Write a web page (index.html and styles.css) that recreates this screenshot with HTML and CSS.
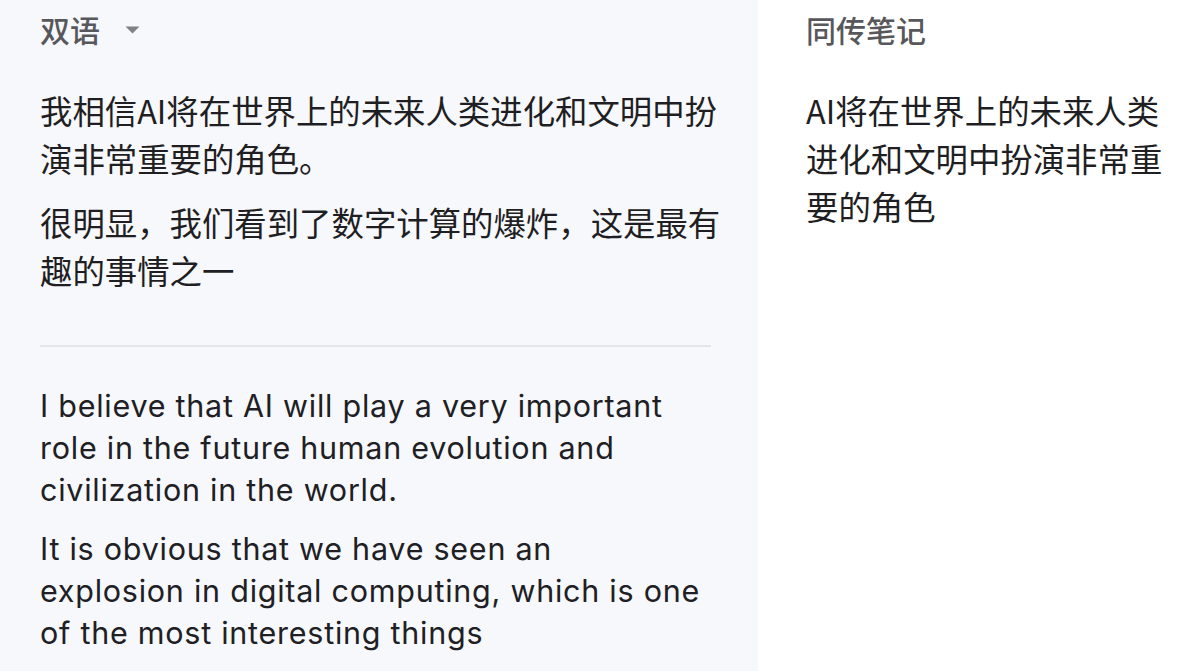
FILE: index.html
```html
<!DOCTYPE html>
<html lang="zh-CN">
<head>
<meta charset="utf-8">
<title>双语 同传笔记</title>
<link rel="stylesheet" href="styles.css">
</head>
<body>
<div class="page">
  <section class="bilingual">
    <div class="head">
      <span class="head-title">双语</span>
      <svg class="caret" width="15" height="8" viewBox="0 0 15 8"><path d="M0.5 0.5 L14.5 0.5 L7.5 7.5 Z" fill="#808085"/></svg>
    </div>
    <div class="zh">
      <p>我相信AI将在世界上的未来人类进化和文明中扮演非常重要的角色。</p>
      <p>很明显，我们看到了数字计算的爆炸，这是最有趣的事情之一</p>
    </div>
    <hr class="divider">
    <div class="en">
      <p>I believe that AI will play a very important role in the future human evolution and civilization in the world.</p>
      <p>It is obvious that we have seen an explosion in digital computing, which is one of the most interesting things</p>
    </div>
  </section>
  <section class="notes">
    <div class="head">
      <span class="head-title">同传笔记</span>
    </div>
    <div class="zh">
      <p>AI将在世界上的未来人类进化和文明中扮演非常重要的角色</p>
    </div>
  </section>
</div>
</body>
</html>
```

FILE: styles.css
```css
html, body {
  margin: 0;
  padding: 0;
  background: #ffffff;
}
body {
  font-family: "Noto Sans CJK SC", "Noto Sans", sans-serif;
  color: #1f1f23;
}
.page {
  display: flex;
  width: 1200px;
  height: 671px;
  overflow: hidden;
}
.bilingual {
  width: 758px;
  box-sizing: border-box;
  background: #f7f8fc;
  padding: 5px 24px 0 40px;
}
.notes {
  flex: 1;
  box-sizing: border-box;
  padding: 5px 30px 0 48px;
}
.head {
  display: flex;
  align-items: center;
  height: 48px;
}
.head-title {
  font-size: 30px;
  font-weight: 500;
  line-height: 48px;
  color: #58585c;
}
.caret {
  margin-left: 25px;
  margin-top: 1px;
}
.zh {
  margin-top: 33px;
}
.zh p {
  margin: 0 0 16px 0;
  font-size: 32.4px;
  line-height: 48px;
}
.divider {
  border: none;
  height: 2px;
  background: #e4e5ea;
  margin: 51px 0 38px 0;
  width: 671px;
}
.en {
  max-width: 662px;
}
.en p {
  margin: 0 0 17px 0;
  font-family: "Inter", "Liberation Sans", sans-serif;
  font-size: 30.5px;
  line-height: 42px;
  letter-spacing: 0.75px;
  color: #202024;
}
```
